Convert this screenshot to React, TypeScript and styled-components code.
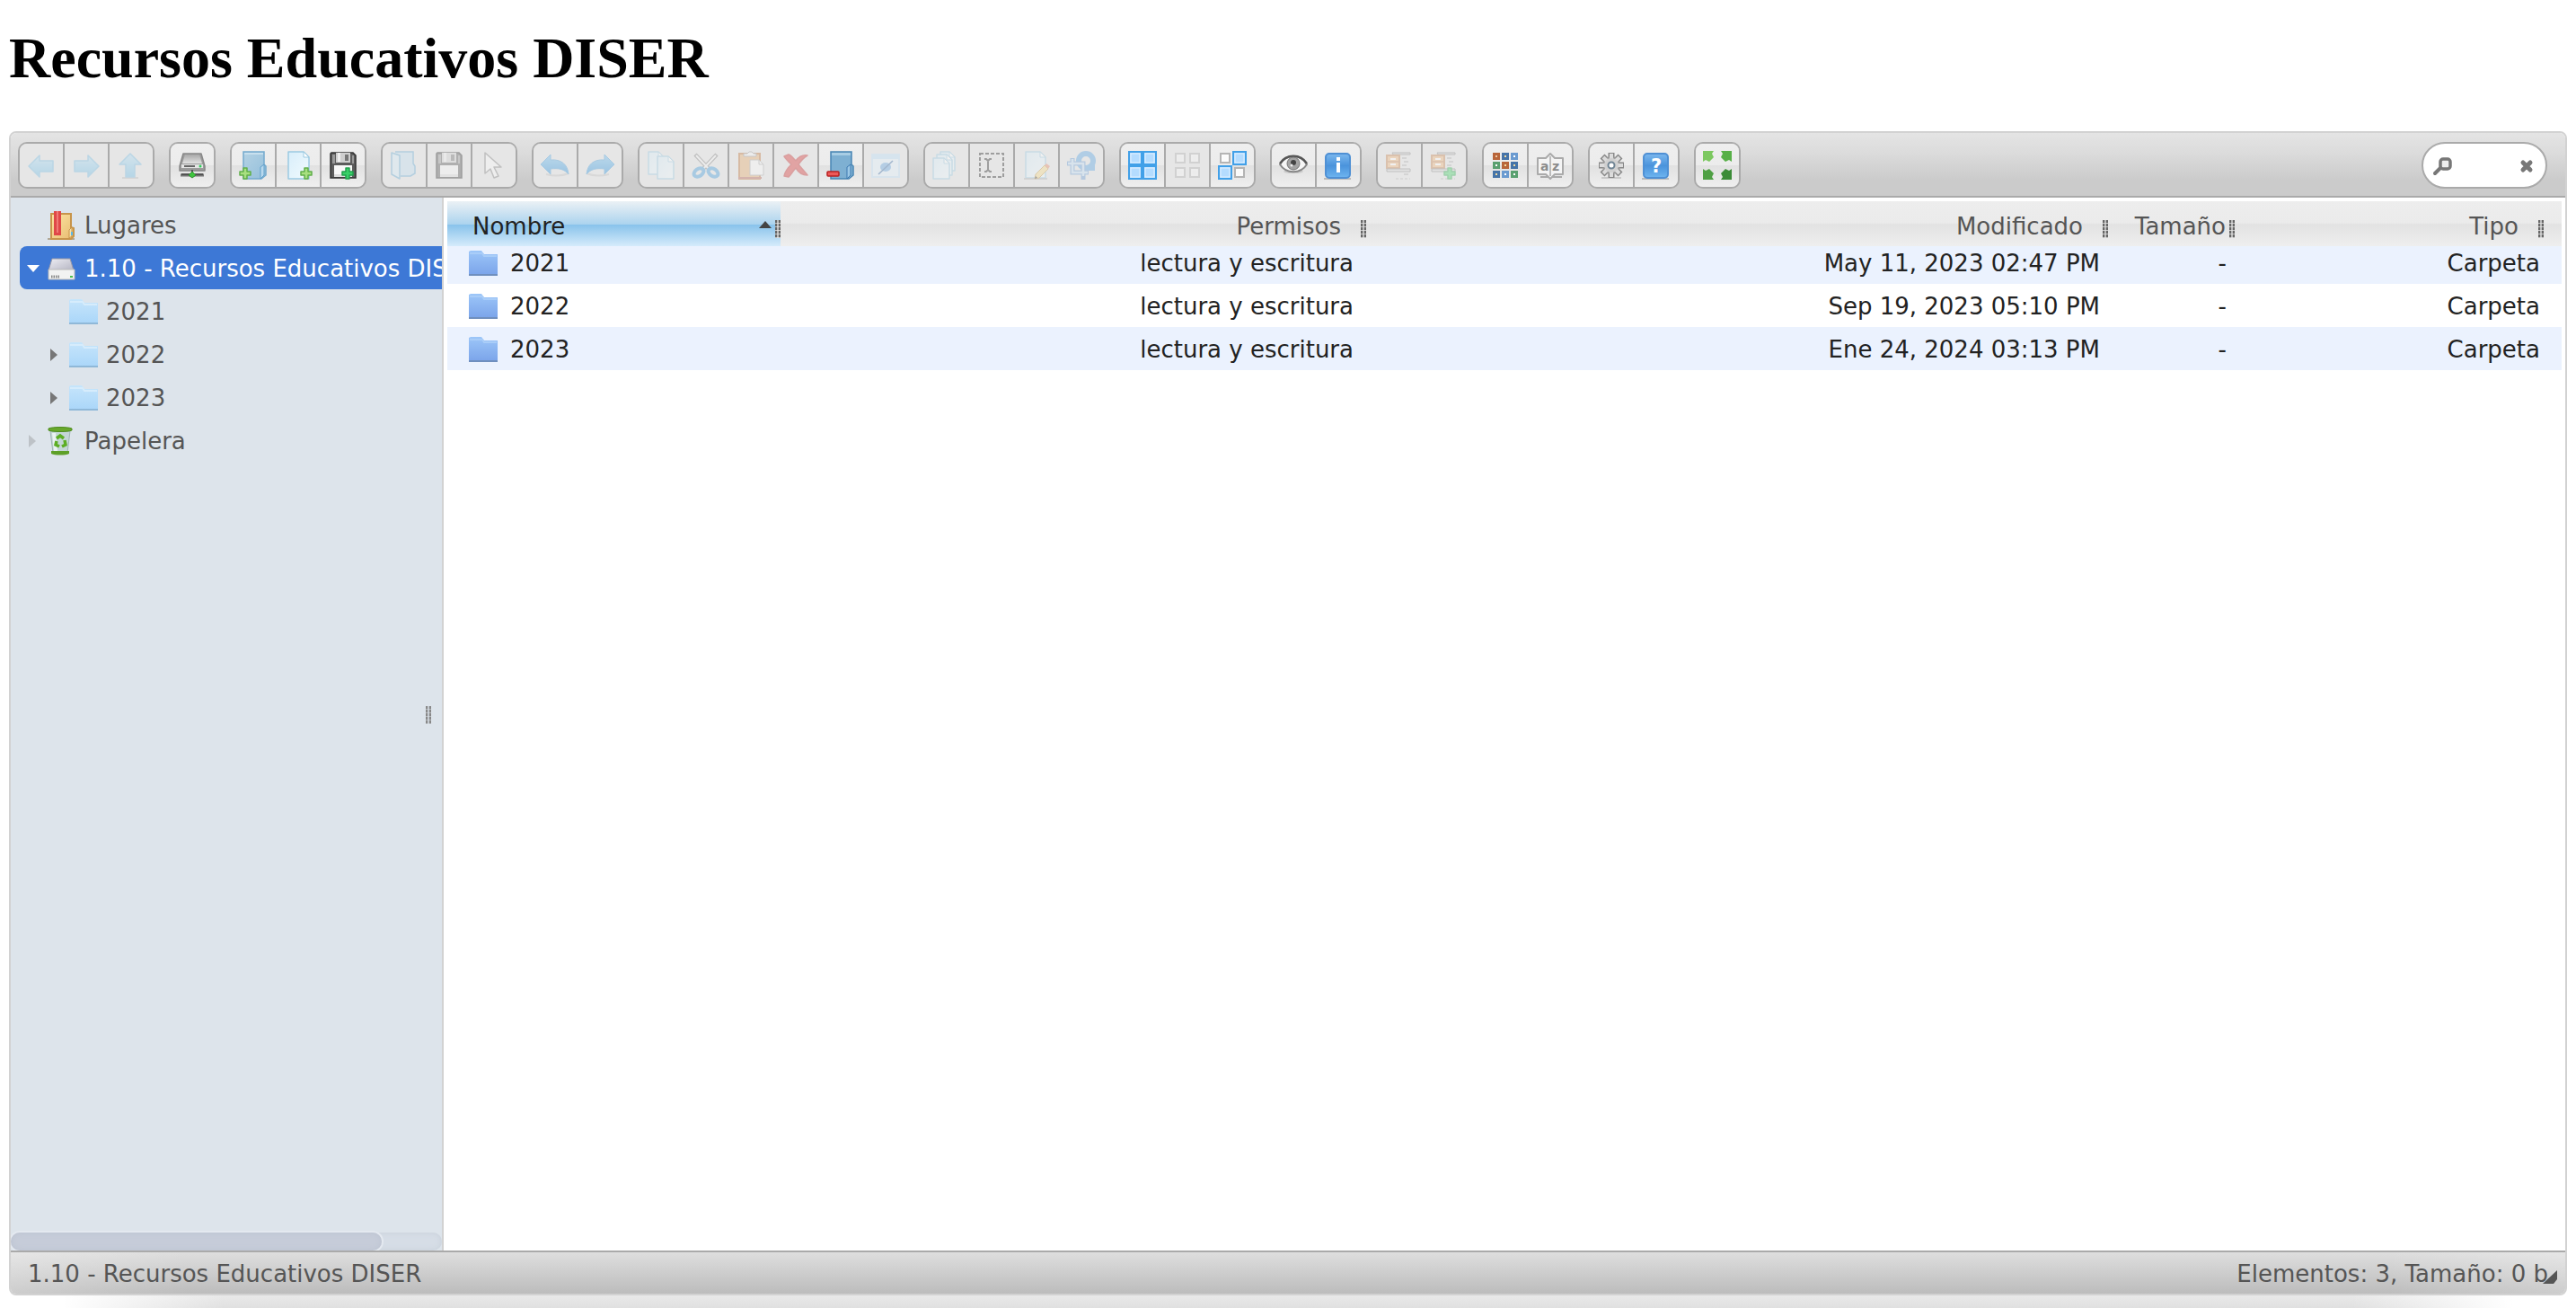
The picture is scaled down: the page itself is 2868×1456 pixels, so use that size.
import React from "react";
import styled, { createGlobalStyle } from "styled-components";

const GlobalStyle = createGlobalStyle`
  *, *::before, *::after { box-sizing: border-box; }
  body { margin: 0; background: #fff; }
  button, input { font: inherit; color: inherit; }
`;

const Page = styled.div`
  display: flex;
  flex-direction: column;
  min-height: 100vh;
  padding: 0 10px;
  font-family: "DejaVu Sans", Verdana, sans-serif;
  font-size: 26px;
  line-height: 32px;
  color: #555;
`;

const Title = styled.h1`
  margin: 0;
  padding: 28px 0 44px;
  font-family: "Liberation Serif", "Times New Roman", serif;
  font-size: 64px;
  line-height: 74px;
  font-weight: bold;
  color: #000;
`;

const Manager = styled.main`
  flex: 1;
  display: flex;
  flex-direction: column;
  border: 2px solid #d2d2d2;
  border-radius: 8px;
  background: #fff;
  overflow: hidden;
`;

const Toolbar = styled.div`
  display: flex;
  align-items: center;
  gap: 16px;
  height: 72px;
  padding: 2px 20px 0 8px;
  border-bottom: 2px solid #aaa;
  background: linear-gradient(#e4e4e4 0%, #dcdcdc 30%, #cbcbcb 75%, #cbcbcb 100%);
`;

const ButtonSet = styled.div`
  display: flex;
  height: 52px;
  border: 2px solid #aaa;
  border-radius: 10px;
  overflow: hidden;
`;

const ToolButton = styled.button`
  width: 50px;
  padding: 0 8px;
  border: 0;
  border-right: 2px solid #aaa;
  background: linear-gradient(#eee 0%, #ececec 50%, #e1e1e1 51%, #efefef 100%);
  display: grid;
  place-items: center;
  cursor: pointer;
  &:last-child { width: 48px; border-right: 0; }
  &:disabled { background: #e6e6e6; cursor: default; }
  &:disabled svg { opacity: 0.4; }
`;

const Picture = styled.svg`
  display: block;
  width: 32px;
  height: 32px;
  flex: none;
`;

const SearchBox = styled.form`
  display: flex;
  align-items: center;
  width: 140px;
  height: 52px;
  margin-left: auto;
  padding: 0 13px 0 10px;
  border: 2px solid #aaa;
  border-radius: 26px;
  background: #fff;
`;

const SearchInput = styled.input`
  flex: 1;
  min-width: 0;
  width: 0;
  border: 0;
  padding: 0 4px;
  background: transparent;
  outline: 0;
`;

const PlainButton = styled.button`
  display: block;
  padding: 2px 0 0;
  border: 0;
  background: none;
  cursor: pointer;
`;

const SmallPicture = styled.svg<{ $size: number }>`
  display: block;
  flex: none;
  width: ${(p) => p.$size}px;
  height: ${(p) => p.$size}px;
`;

const WorkZone = styled.div`
  flex: 1;
  display: flex;
`;

const Sidebar = styled.nav`
  position: relative;
  display: flex;
  flex-direction: column;
  width: 482px;
  flex: none;
  padding-top: 6px;
  border-right: 2px solid #d2d2d2;
  background: #dde4eb;
  overflow: hidden;
`;

const Tree = styled.ul`
  flex: 1;
  list-style: none;
  margin: 0;
  padding: 0 0 0 10px;
`;

const TreeLink = styled.a<{ $level: number; $active?: boolean }>`
  display: flex;
  align-items: center;
  height: 48px;
  padding-top: 2px;
  padding-left: ${(p) => 7 + p.$level * 24}px;
  border-radius: 8px 0 0 8px;
  background: ${(p) => (p.$active ? "#3d78d6" : "transparent")};
  color: ${(p) => (p.$active ? "#fff" : "#555")};
  text-decoration: none;
  white-space: nowrap;
`;

const TreeIcon = styled.span`
  display: flex;
  width: 41px;
  flex: none;
`;

const ArrowSlot = styled.span<{ $faded?: boolean }>`
  display: flex;
  width: 24px;
  flex: none;
  opacity: ${(p) => (p.$faded ? 0.3 : 1)};
`;

const SplitGrip = styled.span`
  position: absolute;
  right: 12px;
  top: 50%;
  width: 6px;
  height: 20px;
  margin-top: -20px;
  background:
    repeating-linear-gradient(transparent 0 3px, rgba(221, 228, 235, 0.5) 3px 4px),
    linear-gradient(90deg, #888 2px, #c4cad0 2px 4px, #888 4px);
`;

const ScrollTrack = styled.div`
  height: 20px;
  border-radius: 10px;
  background: #d6dde6;
  box-shadow: inset 0 0 6px #c8d0da;
`;

const ScrollThumb = styled.div`
  width: 86%;
  height: 20px;
  border-radius: 10px;
  background: #c6ccd9;
  box-shadow: 0 0 0 2px #e4e9f0, inset 0 0 6px #bcc3d0;
`;

const Files = styled.section`
  flex: 1;
  min-width: 0;
  padding: 4px;
`;

const Table = styled.table`
  width: 100%;
  table-layout: fixed;
  border-collapse: collapse;
  color: #222;
`;

const HeadRow = styled.tr`
  height: 50px;
  background: linear-gradient(#ededed 0%, #ebebeb 48%, #e2e2e2 52%, #eeeeee 100%);
`;

const HeadCell = styled.th<{ $sorted?: boolean; $end?: number }>`
  padding: 0 ${(p) => p.$end || 0}px 0 0;
  font-weight: normal;
  color: ${(p) => (p.$sorted ? "#222" : "#555")};
  background: ${(p) =>
    p.$sorted
      ? "linear-gradient(#ebf1f5 0%, #abd3ee 52%, #89c3eb 53%, #d5ebfb 100%)"
      : "none"};
`;

const HeadContent = styled.div<{ $gap: number }>`
  display: flex;
  align-items: center;
  justify-content: flex-end;
  gap: ${(p) => p.$gap}px;
  padding-top: 6px;
  white-space: nowrap;
`;

const SortLabel = styled.span`
  flex: 1;
  padding-left: 28px;
  text-align: left;
`;

const Grip = styled.span`
  width: 6px;
  height: 20px;
  margin-top: 6px;
  flex: none;
  background:
    repeating-linear-gradient(transparent 0 3px, rgba(236, 236, 236, 0.7) 3px 4px),
    linear-gradient(90deg, #666 2px, #bbb 2px 4px, #666 4px);
`;

const FileRow = styled.tr`
  height: 48px;
  &:nth-child(odd) { background: #ebf2fe; }
  &:first-child { height: 42px; }
  &:first-child td { padding-bottom: 6px; }
`;

const Cell = styled.td<{ $end?: number }>`
  padding: 2px ${(p) => p.$end ?? 9}px 0 0;
  text-align: right;
  white-space: nowrap;
`;

const NameCell = styled.td`
  padding: 2px 0 0 24px;
`;

const FileName = styled.span`
  display: flex;
  align-items: center;
  gap: 14px;
`;

const StatusBar = styled.footer`
  position: relative;
  display: flex;
  align-items: center;
  justify-content: space-between;
  height: 48px;
  padding: 2px 19px 0;
  border-top: 2px solid #aaa;
  background:
    linear-gradient(90deg, rgba(255,255,255,0.25) 0, transparent 200px, transparent calc(100% - 200px), rgba(255,255,255,0.25) 100%),
    linear-gradient(#dedede 0%, #bcbcbc 100%);
`;

const ResizeGrip = styled.svg`
  position: absolute;
  right: 9px;
  bottom: 10px;
  width: 16px;
  height: 16px;
`;

const FloorShadow = styled.div`
  height: 14px;
  background:
    linear-gradient(90deg, #fff 60px, transparent 240px, transparent calc(100% - 240px), #fff calc(100% - 60px)),
    linear-gradient(#e9e9e9, #e0e0e0);
`;

const HiddenDefs = styled.svg`
  position: absolute;
`;

const Gradients = () => (
  <HiddenDefs width="0" height="0" aria-hidden="true">
    <defs>
      <linearGradient id="sky" x1="0" y1="0" x2="0" y2="1">
        <stop offset="0" stopColor="#b8e0f6" />
        <stop offset="1" stopColor="#6fbfe8" />
      </linearGradient>
      <linearGradient id="azure" x1="0" y1="0" x2="0" y2="1">
        <stop offset="0" stopColor="#7cb8ee" />
        <stop offset="0.5" stopColor="#4a93dc" />
        <stop offset="1" stopColor="#6fb5f0" />
      </linearGradient>
      <linearGradient id="undo" x1="0" y1="0" x2="0" y2="1">
        <stop offset="0" stopColor="#7cc4f2" />
        <stop offset="1" stopColor="#2c92dc" />
      </linearGradient>
      <linearGradient id="box" x1="0" y1="0" x2="1" y2="1">
        <stop offset="0" stopColor="#b4d2e4" />
        <stop offset="1" stopColor="#94bfdb" />
      </linearGradient>
      <linearGradient id="paper" x1="0" y1="0" x2="1" y2="1">
        <stop offset="0" stopColor="#d8eefa" />
        <stop offset="1" stopColor="#f1fafe" />
      </linearGradient>
      <linearGradient id="metal" x1="0" y1="0" x2="0" y2="1">
        <stop offset="0" stopColor="#a8a8a8" />
        <stop offset="1" stopColor="#e2e2e2" />
      </linearGradient>
      <linearGradient id="folder" x1="0" y1="0" x2="0" y2="1">
        <stop offset="0" stopColor="#9cc6f8" />
        <stop offset="1" stopColor="#7ba4ea" />
      </linearGradient>
      <linearGradient id="treefolder" x1="0" y1="0" x2="0" y2="1">
        <stop offset="0" stopColor="#c6e5fb" />
        <stop offset="1" stopColor="#aad6f9" />
      </linearGradient>
      <linearGradient id="tan" x1="0" y1="0" x2="1" y2="1">
        <stop offset="0" stopColor="#fbe6a4" />
        <stop offset="1" stopColor="#e9bb70" />
      </linearGradient>
      <linearGradient id="lid" x1="0" y1="0" x2="1" y2="1">
        <stop offset="0" stopColor="#eeeef4" />
        <stop offset="1" stopColor="#b4b4c2" />
      </linearGradient>
    </defs>
  </HiddenDefs>
);

const plus = (x: number, y: number, fill: string, stroke: string) => (
  <path
    d={`M${x - 2} ${y - 6}h4v4h4v4h-4v4h-4v-4h-4v-4h4z`}
    fill={fill}
    stroke={stroke}
    strokeWidth="1.5"
    strokeLinejoin="round"
  />
);

const disk = (
  <>
    <path d="M3 2h24l3 3v25H2V3z" fill="#5c5c5c" stroke="#333" strokeWidth="1.5" />
    <path d="M4 4h3v10H4zM26 5h2v9h-2z" fill="#999" />
    <path d="M8 2h16v11H8z" fill="#cfcfcf" />
    <path d="M10 2h3v10h-3z" fill="#eee" />
    <path d="M18 4h4v7h-4z" fill="#777" />
    <path d="M6 16h20v13H6z" fill="#f8f8f8" />
    <path d="M6 26h20v3H6z" fill="#ddd" />
  </>
);

const box = (
  <>
    <path d="M5 1h23v14l2 2v10l-5 4H5z" fill="url(#box)" stroke="#74aace" strokeWidth="1.5" />
    <path d="M6 2h21v2H6z" fill="#c8e0ee" />
    <path d="M24 31V18l4-3v12z" fill="#b9d9ee" stroke="#5f9fca" strokeWidth="1" />
  </>
);

const page = (x: number, y: number, w = 20, h = 26) => (
  <>
    <path
      d={`M${x} ${y}h${w - 6}l6 6v${h - 6}h-${w}z`}
      fill="url(#paper)"
      stroke="#9ccae2"
      strokeWidth="1.5"
      strokeLinejoin="round"
    />
    <path d={`M${x + w - 6} ${y}v6h6z`} fill="#fff" stroke="#9ccae2" strokeWidth="1" />
  </>
);

const cabinet = (
  <>
    <path d="M8 2h20v2H9z" fill="#ddd" stroke="#888" />
    <path d="M2 5h14v14H2z" fill="#f0b880" stroke="#c88a58" strokeWidth="2" />
    <path d="M3 12h12" stroke="#c88a58" strokeWidth="1.5" />
    <path d="M6 9h6M6 15h6" stroke="#fff" strokeWidth="2" />
    <path d="M19 8h5M21 12h5M19 16h5M21 26h5" stroke="#aaa" strokeWidth="1.5" />
    <path d="M2 20h26v3H2z" fill="#ddd" stroke="#888" />
    <path d="M12 31h16" stroke="#aaa" strokeDasharray="3 2" />
  </>
);

const leftArrow = (
  <path
    d="M2 17 14 5v6h15v12H14v6z"
    fill="url(#sky)"
    stroke="#7cbfe4"
    strokeWidth="1.5"
    strokeLinejoin="round"
  />
);

const curved = (
  <>
    <path d="M6 26c8 2 18 2 25-1" stroke="#aaa" strokeWidth="2" fill="none" opacity=".6" />
    <path
      d="M0 15 11 4v6c12-1 19 5 20 16-5-6-11-7-20-6v6z"
      fill="url(#undo)"
      stroke="#4ba0dc"
      strokeLinejoin="round"
    />
  </>
);

const tile = (x: number, y: number, s: number, fill: string, stroke: string) => (
  <>
    <rect x={x + 1} y={y + 1} width={s - 2} height={s - 2} fill={fill} stroke={stroke} strokeWidth="2" />
    <rect x={x + 3} y={y + 3} width={s - 6} height={s - 6} fill="none" stroke="#fff" strokeWidth="1" opacity=".6" />
  </>
);

const gridColors = [
  ["#b8653a", "#f0c8a0"], ["#4674a8", "#f4dca0"], ["#6a9ad0", "#fff"],
  ["#5aa070", "#fff"], ["#b8653a", "#f4dca0"], ["#4674a8", "#f4dca0"],
  ["#4674a8", "#f4dca0"], ["#6a9ad0", "#fff"], ["#5aa070", "#fff"],
];

const icons: Record<string, React.ReactNode> = {
  back: leftArrow,
  forward: <g transform="matrix(-1 0 0 1 32 0)">{leftArrow}</g>,
  up: (
    <>
      <path d="M6 30h18" stroke="#999" strokeWidth="2" opacity=".5" />
      <path d="M15 3 27 15h-7v14h-10V15H3z" fill="url(#sky)" stroke="#7cbfe4" strokeWidth="1.5" strokeLinejoin="round" />
    </>
  ),
  netmount: (
    <>
      <path d="M6 3h20l4 14v5H2v-5z" fill="#9c9c9c" stroke="#888" strokeWidth="1.5" strokeLinejoin="round" />
      <path d="M8 4h16l3 10H5z" fill="url(#metal)" />
      <path d="M4 15h24v4H4z" fill="#e4e4e4" />
      <path d="M7 17h12" stroke="#666" strokeWidth="2" />
      <circle cx="25" cy="17" r="1.5" fill="#2fd05a" />
      <path d="M3 27h26" stroke="#777" strokeWidth="3" />
      <path d="M4 26h24M16 21v5" stroke="#444" strokeWidth="1.5" />
      <path d="M16 23 20 27 16 30 12 27z" fill="#3fc43f" stroke="#2f8f2f" />
    </>
  ),
  mkdir: <>{box}{plus(7, 25, "#a8e080", "#5fae4a")}</>,
  mkfile: <>{page(5, 1, 23, 30)}{plus(25, 25, "#a8e080", "#5fae4a")}</>,
  upload: <>{disk}{plus(21, 25, "#38d068", "#1fa04c")}</>,
  open: (
    <>
      <path d="M6 1h20v13l2 3v8l-5 3H12" fill="#c2dff0" stroke="#6aacd4" strokeWidth="1.5" />
      <path d="M2 2 11 5v26L2 26z" fill="#d4ebf7" stroke="#6aacd4" strokeWidth="1.5" strokeLinejoin="round" />
    </>
  ),
  download: disk,
  pointer: (
    <path d="M6 2v23l6-5 4 10 5-2-5-10h8z" fill="#fafafa" stroke="#888" strokeWidth="1.5" strokeLinejoin="round" />
  ),
  undo: curved,
  redo: <g transform="matrix(-1 0 0 1 32 0)">{curved}</g>,
  copy: <>{page(2, 1, 17, 25)}{page(12, 6, 18, 25)}</>,
  cut: (
    <>
      <path d="M4 4 21 22M28 4 11 22" stroke="#888" strokeWidth="4.5" />
      <path d="M5 5 21 22M27 5 11 22" stroke="#f4f4f4" strokeWidth="2" />
      <ellipse cx="8" cy="24" rx="6" ry="4" fill="none" stroke="#4ba0dc" strokeWidth="4" transform="rotate(-35 8 24)" />
      <ellipse cx="24" cy="24" rx="6" ry="4" fill="none" stroke="#4ba0dc" strokeWidth="4" transform="rotate(35 24 24)" />
    </>
  ),
  paste: (
    <>
      <path d="M3 3h23v28H3z" fill="#e6ae74" stroke="#c07840" strokeWidth="2" />
      <path d="M2 30h26" stroke="#b86a5a" strokeWidth="2" />
      <path d="M8 6V3h4l2-2h3l2 2h3v3z" fill="#f4f4f4" stroke="#999" />
      <path d="M15 10h10l5 5v12H15z" fill="#fbfbfb" stroke="#aaa" />
      <path d="M25 10v5h5" fill="none" stroke="#aaa" />
    </>
  ),
  rm: (
    <path
      d="M3 6 8 4c3 1 5 4 8 7 3-4 7-7 13-6-5 3-8 7-10 10 3 4 6 7 10 12-6 0-10-3-13-8-3 3-5 7-8 10l-5-1c1-6 5-10 8-13-3-3-6-6-8-9z"
      fill="#dc4040"
      stroke="#c83838"
      strokeWidth="1.5"
      strokeLinejoin="round"
    />
  ),
  empty: (
    <>
      <path d="M5 1h23v14l2 2v10l-5 4H5z" fill="#7eb0d2" stroke="#4a86b4" strokeWidth="1.5" />
      <path d="M6 2h21v3H6z" fill="#a8cde4" />
      <path d="M23 31V18l4-3v12z" fill="#9cc8e6" stroke="#3c78b0" />
      <rect x="1" y="23" width="13" height="5" rx="1" fill="#ec5a5a" stroke="#b82020" strokeWidth="1.5" />
    </>
  ),
  hide: (
    <>
      <path d="M1 4h30v25H1z" fill="#e4f2fd" stroke="#c4e0f8" strokeWidth="2" />
      <path d="M1 4h30v5H1z" fill="#bfe0fa" />
      <ellipse cx="16" cy="18" rx="6" ry="5" fill="#6aa8e0" />
      <path d="M8 26 24 11" stroke="#3c6ea8" strokeWidth="1.5" />
    </>
  ),
  duplicate: <>{page(9, 1, 16, 21)}{page(5, 4, 17, 23)}{page(1, 8, 18, 23)}</>,
  rename: (
    <>
      <path d="M3 3h26v26H3z" fill="none" stroke="#333" strokeWidth="2" strokeDasharray="4 2" />
      <path d="M8 9h2l2 2 2-2h2M12 10v12M8 23h2l2-2 2 2h2" fill="none" stroke="#333" strokeWidth="2" />
    </>
  ),
  edit: (
    <>
      {page(4, 1, 22, 29)}
      <path d="M2 31h26" stroke="#aaa" strokeWidth="1.5" />
      <path d="M14 31 15 26 25 16 29 20 19 30z" fill="#f8dc90" stroke="#c8a050" />
      <path d="M25 16l2-2 4 3-2 3z" fill="#e89070" />
      <path d="M14 31l1-3 2 2z" fill="#333" />
    </>
  ),
  resize: (
    <>
      <circle cx="21" cy="11" r="8" fill="none" stroke="#5fa8e4" strokeWidth="6" />
      <path d="M18 16h13v6H18z" fill="#5fa8e4" />
      <path d="M0 14h18v14M6 8v16h18M18 26v6" fill="none" stroke="#6f9fd4" strokeWidth="5" />
      <path d="M1 14h17v14M6 9v15h17" fill="none" stroke="#c4dff6" strokeWidth="2.5" />
    </>
  ),
  selectall: (
    <>
      {tile(0, 0, 16, "#b4dcff", "#41a0e8")}
      {tile(16, 0, 16, "#b4dcff", "#41a0e8")}
      {tile(0, 16, 16, "#b4dcff", "#41a0e8")}
      {tile(16, 16, 16, "#b4dcff", "#41a0e8")}
    </>
  ),
  selectnone: (
    <>
      {tile(2, 2, 12, "#f6f6f6", "#b4b4b4")}
      {tile(18, 2, 12, "#f6f6f6", "#b4b4b4")}
      {tile(2, 18, 12, "#f6f6f6", "#b4b4b4")}
      {tile(18, 18, 12, "#f6f6f6", "#b4b4b4")}
    </>
  ),
  invert: (
    <>
      {tile(2, 2, 12, "#fafafa", "#b4b4b4")}
      {tile(16, 0, 16, "#b4dcff", "#41a0e8")}
      {tile(0, 16, 16, "#b4dcff", "#41a0e8")}
      {tile(18, 18, 12, "#fafafa", "#b4b4b4")}
    </>
  ),
  preview: (
    <>
      <ellipse cx="16" cy="23" rx="11" ry="2" fill="#bbb" opacity=".6" />
      <path d="M1 15C8 3 24 3 31 15 24 26 8 26 1 15z" fill="#f6f6f6" stroke="#888" strokeWidth="2" />
      <path d="M1 14C8 3 24 3 31 14" fill="none" stroke="#555" strokeWidth="2.5" />
      <circle cx="16" cy="14" r="7" fill="#a4a4a4" stroke="#777" />
      <circle cx="16" cy="13" r="3" fill="#444" />
      <circle cx="14" cy="16" r="1.5" fill="#eee" />
    </>
  ),
  info: (
    <>
      <path d="M0 31h30" stroke="#bbb" strokeWidth="2" />
      <rect x="2" y="3" width="27" height="27" rx="4" fill="url(#azure)" stroke="#4f90d4" strokeWidth="2" />
      <path d="M14 7h4v4h-4zM14 13h4v11h-4z" fill="#fff" />
    </>
  ),
  extract: cabinet,
  archive: <>{cabinet}{plus(22, 25, "#50d870", "#38b058")}</>,
  view: (
    <>
      {gridColors.map(([edge, fill], i) => (
        <rect key={i} x={3.5 + (i % 3) * 10} y={3.5 + Math.floor(i / 3) * 10} width="5" height="5" fill={fill} stroke={edge} strokeWidth="3" />
      ))}
    </>
  ),
  sort: (
    <>
      <path d="M5 29h24" stroke="#aaa" strokeWidth="2" />
      <path d="M2 8h9l5-5 5 5h9v18h-9l-5 5-5-5H2z" fill="#f4f4f4" stroke="#aaa" strokeWidth="2" strokeLinejoin="round" />
      <path d="M16 6v22" stroke="#aaa" strokeWidth="1.5" />
      <text x="5" y="22" fontSize="14" fontWeight="bold" fontFamily="DejaVu Sans" fill="#8c8c8c">a</text>
      <text x="18" y="22" fontSize="14" fontWeight="bold" fontFamily="DejaVu Sans" fill="#8c8c8c">z</text>
    </>
  ),
  preference: (
    <>
      <path d="M5 30h22" stroke="#aaa" strokeWidth="2" opacity=".5" />
      <path d="M16 2v28M2 16h28M6 6l20 20M26 6L6 26" stroke="#888" strokeWidth="7" />
      <circle cx="16" cy="16" r="10" fill="#999" />
      <path d="M16 3v26M3 16h26M7 7l18 18M25 7L7 25" stroke="#dcdcdc" strokeWidth="4" />
      <circle cx="16" cy="16" r="8" fill="#d0d0d0" />
      <circle cx="16" cy="16" r="3.5" fill="#fff" stroke="#6f8494" strokeWidth="2" />
    </>
  ),
  help: (
    <>
      <path d="M0 31h30" stroke="#bbb" strokeWidth="2" />
      <rect x="2" y="3" width="27" height="27" rx="4" fill="url(#azure)" stroke="#4f90d4" strokeWidth="2" />
      <text x="16" y="24" textAnchor="middle" fontSize="21" fontWeight="bold" fontFamily="DejaVu Sans" fill="#fff">?</text>
    </>
  ),
  fullscreen: (
    <>
      <path d="M0 0h12l-2 3 2 4-5 5-4-2-3 2z" fill="#7cc860" />
      <path d="M32 0v12l-3-2-4 2-5-5 2-4-2-3z" fill="#58b048" />
      <path d="M0 32V20l3 2 4-2 5 5-2 4 2 3z" fill="#4fa044" />
      <path d="M32 32H20l2-3-2-4 5-5 4 2 3-2z" fill="#3c8c38" />
    </>
  ),
};

const Icon = ({ name }: { name: string }) => (
  <Picture viewBox="0 0 32 32" aria-hidden="true">{icons[name]}</Picture>
);

type Tool = [name: string, label: string, disabled?: boolean];

const toolGroups: Tool[][] = [
  [["back", "Atrás", true], ["forward", "Adelante", true], ["up", "Subir", true]],
  [["netmount", "Montar unidad de red"]],
  [["mkdir", "Nueva carpeta"], ["mkfile", "Nuevo archivo"], ["upload", "Subir archivos"]],
  [["open", "Abrir", true], ["download", "Descargar", true], ["pointer", "Seleccionar archivo", true]],
  [["undo", "Deshacer", true], ["redo", "Rehacer", true]],
  [["copy", "Copiar", true], ["cut", "Cortar", true], ["paste", "Pegar", true], ["rm", "Eliminar", true], ["empty", "Vaciar carpeta"], ["hide", "Ocultar", true]],
  [["duplicate", "Duplicar", true], ["rename", "Renombrar", true], ["edit", "Editar", true], ["resize", "Redimensionar", true]],
  [["selectall", "Seleccionar todo"], ["selectnone", "Deseleccionar", true], ["invert", "Invertir selección"]],
  [["preview", "Vista previa"], ["info", "Información"]],
  [["extract", "Extraer", true], ["archive", "Comprimir", true]],
  [["view", "Vista de iconos"], ["sort", "Ordenar"]],
  [["preference", "Preferencias"], ["help", "Ayuda"]],
  [["fullscreen", "Pantalla completa"]],
];

const FolderIcon = ({ tree }: { tree?: boolean }) => (
  <Picture viewBox="0 0 32 32" aria-hidden="true">
    <path d="M0 29V3l2-1h12l3 4h15v23z" fill={tree ? "url(#treefolder)" : "url(#folder)"} />
    <path d="M1 5h14l2 3h14" fill="none" stroke={tree ? "#d6ecfc" : "#a9cdf8"} strokeWidth="2" />
    <path d="M0 29h32" stroke={tree ? "#8fb8d8" : "#6f8fbe"} strokeWidth="2" />
  </Picture>
);

const treeIcons: Record<string, React.ReactNode> = {
  places: (
    <Picture viewBox="0 0 32 32" aria-hidden="true">
      <path d="M0 31h30" stroke="#b0a898" strokeWidth="2" />
      <path d="M4 3h22v15l3 1v9l-3 3H4z" fill="url(#tan)" stroke="#c8954a" strokeWidth="2" />
      <path d="M24 30V21l3-3v10z" fill="#f6e0a8" stroke="#c8954a" />
      <path d="M26 23h2v4h-2z" fill="#5ab8e8" />
      <path d="M7 0h8v27H7z" fill="#e04848" />
      <path d="M10 0h2v24h-2z" fill="#f07a74" />
    </Picture>
  ),
  drive: (
    <Picture viewBox="0 0 32 32" aria-hidden="true">
      <path d="M5 5h20l4 13H1z" fill="url(#lid)" stroke="#9a9aa8" strokeLinejoin="round" />
      <path d="M1 17h29v11H1z" fill="#f2f2f2" stroke="#bbb" />
      <path d="M4 25h10" stroke="#888" strokeWidth="3" strokeDasharray="1.5 1" />
      <path d="M25 25h3" stroke="#4cc04c" strokeWidth="2" />
    </Picture>
  ),
  trash: (
    <Picture viewBox="0 0 32 32" aria-hidden="true">
      <path d="M3 5h22l-3 24H6z" fill="#c4d6d6" stroke="#a0b4b4" />
      <path d="M5 7h4l2 20H7z" fill="#eaf2f2" />
      <path d="M4 27h20v3c-4 2-16 2-20 0z" fill="#5ea028" />
      <path d="M1 2c4-2 22-2 26 0v2c-4 2-22 2-26 0z" fill="#68a82c" stroke="#4f8c20" />
      <path d="M10 13l4-3 4 3M19 15l1 5-4 2M13 22l-4-2 1-4" fill="none" stroke="#5cae24" strokeWidth="3.5" />
    </Picture>
  ),
  folder: <FolderIcon tree />,
};

const TreeArrow = ({ open }: { open?: boolean }) => (
  <SmallPicture $size={16} viewBox="0 0 16 16" aria-hidden="true">
    {open ? <path d="M1 4h14L8 12z" fill="#fff" /> : <path d="M3 1 11 8l-8 7z" fill="#777" />}
  </SmallPicture>
);

const tree = [
  { label: "Lugares", icon: "places", level: 0 },
  { label: "1.10 - Recursos Educativos DISER", icon: "drive", level: 0, arrow: "open", active: true },
  { label: "2021", icon: "folder", level: 1 },
  { label: "2022", icon: "folder", level: 1, arrow: "closed" },
  { label: "2023", icon: "folder", level: 1, arrow: "closed" },
  { label: "Papelera", icon: "trash", level: 0, arrow: "faded" },
];

const files = [
  { name: "2021", date: "May 11, 2023 02:47 PM" },
  { name: "2022", date: "Sep 19, 2023 05:10 PM" },
  { name: "2023", date: "Ene 24, 2024 03:13 PM" },
];

export default function App() {
  return (
    <>
      <GlobalStyle />
      <Gradients />
      <Page>
        <Title>Recursos Educativos DISER</Title>
        <Manager>
          <Toolbar role="toolbar">
            {toolGroups.map((group, i) => (
              <ButtonSet key={i}>
                {group.map(([name, label, disabled]) => (
                  <ToolButton key={name} type="button" aria-label={label} disabled={disabled}>
                    <Icon name={name} />
                  </ToolButton>
                ))}
              </ButtonSet>
            ))}
            <SearchBox role="search">
              <SmallPicture $size={24} viewBox="0 0 24 24" aria-hidden="true">
                <path d="M3 21 9 15" stroke="#777" strokeWidth="4" strokeLinecap="round" />
                <rect x="9" y="5" width="11" height="11" rx="3" fill="#eee" stroke="#777" strokeWidth="3.5" />
              </SmallPicture>
              <SearchInput type="text" aria-label="Buscar" />
              <PlainButton type="button" aria-label="Limpiar">
                <SmallPicture $size={16} viewBox="0 0 16 16" aria-hidden="true">
                  <path d="M4 4l8 8M12 4l-8 8" stroke="#777" strokeWidth="5" strokeLinecap="round" />
                </SmallPicture>
              </PlainButton>
            </SearchBox>
          </Toolbar>
          <WorkZone>
            <Sidebar>
              <Tree>
                {tree.map((node) => (
                  <li key={node.label}>
                    <TreeLink href="#" $level={node.level} $active={node.active}>
                      <ArrowSlot $faded={node.arrow === "faded"}>
                        {node.arrow && <TreeArrow open={node.arrow === "open"} />}
                      </ArrowSlot>
                      <TreeIcon>{treeIcons[node.icon]}</TreeIcon>
                      {node.label}
                    </TreeLink>
                  </li>
                ))}
              </Tree>
              <SplitGrip />
              <ScrollTrack>
                <ScrollThumb />
              </ScrollTrack>
            </Sidebar>
            <Files>
              <Table>
                <colgroup>
                  <col style={{ width: 371 }} />
                  <col style={{ width: 652 }} />
                  <col />
                  <col style={{ width: 141 }} />
                  <col style={{ width: 364 }} />
                </colgroup>
                <thead>
                  <HeadRow>
                    <HeadCell $sorted>
                      <HeadContent $gap={4}>
                        <SortLabel>Nombre</SortLabel>
                        <SmallPicture $size={14} viewBox="0 0 14 14" aria-hidden="true">
                          <path d="M7 1 14 9H0z" fill="#444" />
                        </SmallPicture>
                        <Grip />
                      </HeadContent>
                    </HeadCell>
                    <HeadCell><HeadContent $gap={22}>Permisos<Grip /></HeadContent></HeadCell>
                    <HeadCell><HeadContent $gap={22}>Modificado<Grip /></HeadContent></HeadCell>
                    <HeadCell><HeadContent $gap={4}>Tamaño<Grip /></HeadContent></HeadCell>
                    <HeadCell $end={20}><HeadContent $gap={22}>Tipo<Grip /></HeadContent></HeadCell>
                  </HeadRow>
                </thead>
                <tbody>
                  {files.map((file) => (
                    <FileRow key={file.name}>
                      <NameCell>
                        <FileName><FolderIcon />{file.name}</FileName>
                      </NameCell>
                      <Cell $end={14}>lectura y escritura</Cell>
                      <Cell>{file.date}</Cell>
                      <Cell>-</Cell>
                      <Cell $end={24}>Carpeta</Cell>
                    </FileRow>
                  ))}
                </tbody>
              </Table>
            </Files>
          </WorkZone>
          <StatusBar>
            <span>1.10 - Recursos Educativos DISER</span>
            <span>Elementos: 3, Tamaño: 0 b</span>
            <ResizeGrip viewBox="0 0 16 16" aria-hidden="true">
              <path d="M16 0v10l-4 5H0z" fill="#555" />
            </ResizeGrip>
          </StatusBar>
        </Manager>
        <FloorShadow />
      </Page>
    </>
  );
}
